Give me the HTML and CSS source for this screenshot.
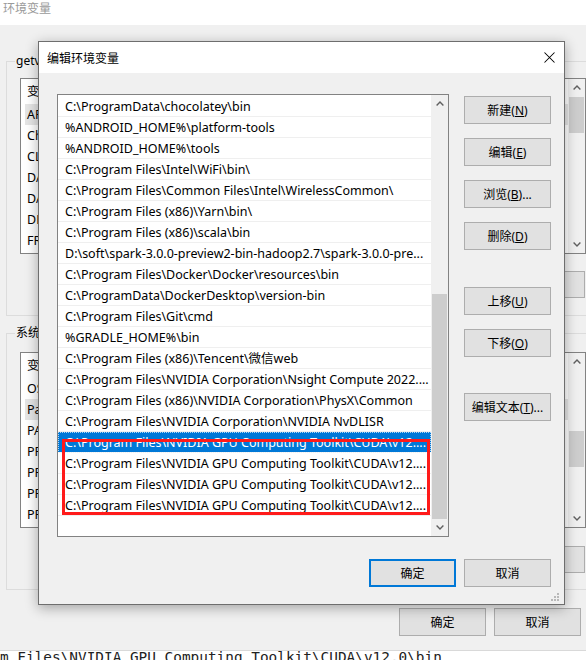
FILE: index.html
```html
<!DOCTYPE html>
<html lang="zh-CN">
<head>
<meta charset="utf-8">
<title>编辑环境变量</title>
<link rel="stylesheet" href="styles.css">
</head>
<body>
<div class="screen">
  <div class="env">
    <div class="env-title">环境变量</div>
    <div class="group group-user">
      <div class="group-label">getv 的用户变量(U)</div>
      <div class="vlist">
        <div class="vlist-body">
          <div class="vlist-head">变量</div>
          <div class="vrow sel">APP</div>
          <div class="vrow">Cho</div>
          <div class="vrow">CLA</div>
          <div class="vrow">DAT</div>
          <div class="vrow">DAS</div>
          <div class="vrow">DEV</div>
          <div class="vrow">FRP</div>
        </div>
        <div class="vscroll">
          <div class="sb-arrow"><svg width="8" height="5" viewBox="0 0 8 5"><path d="M0.6 4.4 L4 1 L7.4 4.4" fill="none" stroke="#606060" stroke-width="1.4"/></svg></div>
          <div class="sb-thumb thumb-user"></div>
          <div class="sb-arrow sb-end"><svg width="8" height="5" viewBox="0 0 8 5"><path d="M0.6 0.6 L4 4 L7.4 0.6" fill="none" stroke="#606060" stroke-width="1.4"/></svg></div>
        </div>
      </div>
      <div class="grp-buttons">
        <button class="btn">新建(N)...</button>
        <button class="btn">编辑(E)...</button>
        <button class="btn">删除(D)</button>
      </div>
    </div>
    <div class="group group-sys">
      <div class="group-label">系统变量(S)</div>
      <div class="vlist">
        <div class="vlist-body">
          <div class="vlist-head">变量</div>
          <div class="vrow">OS</div>
          <div class="vrow sel">Path</div>
          <div class="vrow">PATH</div>
          <div class="vrow">PRO</div>
          <div class="vrow">PRO</div>
          <div class="vrow">PRO</div>
          <div class="vrow">PRO</div>
        </div>
        <div class="vscroll">
          <div class="sb-arrow"><svg width="8" height="5" viewBox="0 0 8 5"><path d="M0.6 4.4 L4 1 L7.4 4.4" fill="none" stroke="#606060" stroke-width="1.4"/></svg></div>
          <div class="sb-thumb thumb-sys"></div>
          <div class="sb-arrow sb-end"><svg width="8" height="5" viewBox="0 0 8 5"><path d="M0.6 0.6 L4 4 L7.4 0.6" fill="none" stroke="#606060" stroke-width="1.4"/></svg></div>
        </div>
      </div>
      <div class="grp-buttons grp-buttons-sys">
        <button class="btn">新建(W)...</button>
        <button class="btn">编辑(I)...</button>
        <button class="btn">删除(L)</button>
      </div>
    </div>
    <div class="env-foot">
      <button class="btn btn-tall">确定</button>
      <button class="btn btn-tall">取消</button>
    </div>
  </div>
  <div class="console"><div class="console-text">m Files\NVIDIA GPU Computing Toolkit\CUDA\v12.0\bin</div></div>

  <div class="dlg">
    <div class="dlg-title">
      <span>编辑环境变量</span>
      <svg class="close" width="11" height="11" viewBox="0 0 11 11"><path d="M0.5 0.5 L10.5 10.5 M10.5 0.5 L0.5 10.5" stroke="#000" stroke-width="1.05" fill="none"/></svg>
    </div>
    <div class="dlg-body">
      <div class="dlg-main">
        <div class="plist">
          <div class="plist-rows">
            <div class="prow">C:\ProgramData\chocolatey\bin</div>
            <div class="prow">%ANDROID_HOME%\platform-tools</div>
            <div class="prow">%ANDROID_HOME%\tools</div>
            <div class="prow">C:\Program Files\Intel\WiFi\bin\</div>
            <div class="prow">C:\Program Files\Common Files\Intel\WirelessCommon\</div>
            <div class="prow">C:\Program Files (x86)\Yarn\bin\</div>
            <div class="prow">C:\Program Files (x86)\scala\bin</div>
            <div class="prow">D:\soft\spark-3.0.0-preview2-bin-hadoop2.7\spark-3.0.0-pre...</div>
            <div class="prow">C:\Program Files\Docker\Docker\resources\bin</div>
            <div class="prow">C:\ProgramData\DockerDesktop\version-bin</div>
            <div class="prow">C:\Program Files\Git\cmd</div>
            <div class="prow">%GRADLE_HOME%\bin</div>
            <div class="prow">C:\Program Files (x86)\Tencent\微信web</div>
            <div class="prow">C:\Program Files\NVIDIA Corporation\Nsight Compute 2022....</div>
            <div class="prow">C:\Program Files (x86)\NVIDIA Corporation\PhysX\Common</div>
            <div class="prow">C:\Program Files\NVIDIA Corporation\NVIDIA NvDLISR</div>
            <div class="prow sel">C:\Program Files\NVIDIA GPU Computing Toolkit\CUDA\v12....</div>
            <div class="prow">C:\Program Files\NVIDIA GPU Computing Toolkit\CUDA\v12....</div>
            <div class="prow">C:\Program Files\NVIDIA GPU Computing Toolkit\CUDA\v12....</div>
            <div class="prow">C:\Program Files\NVIDIA GPU Computing Toolkit\CUDA\v12....</div>
          </div>
          <div class="pscroll">
            <div class="sb-arrow"><svg width="8" height="5" viewBox="0 0 8 5"><path d="M0.6 4.4 L4 1 L7.4 4.4" fill="none" stroke="#606060" stroke-width="1.4"/></svg></div>
            <div class="sb-thumb thumb-path"></div>
            <div class="sb-arrow"><svg width="8" height="5" viewBox="0 0 8 5"><path d="M0.6 0.6 L4 4 L7.4 0.6" fill="none" stroke="#606060" stroke-width="1.4"/></svg></div>
          </div>
          <div class="mark"></div>
        </div>
        <div class="side">
          <button class="btn">新建(<u>N</u>)</button>
          <button class="btn">编辑(<u>E</u>)</button>
          <button class="btn">浏览(<u>B</u>)...</button>
          <button class="btn">删除(<u>D</u>)</button>
          <button class="btn side-gap">上移(<u>U</u>)</button>
          <button class="btn">下移(<u>O</u>)</button>
          <button class="btn side-gap2">编辑文本(<u>T</u>)...</button>
        </div>
      </div>
      <div class="dlg-foot">
        <button class="btn btn-tall btn-default">确定</button>
        <button class="btn btn-tall">取消</button>
      </div>
    </div>
    <svg class="grip" width="8" height="8" viewBox="0 0 8 8">
      <rect x="6" y="0" width="2" height="2" fill="#b8b8b8"/>
      <rect x="3" y="3" width="2" height="2" fill="#b8b8b8"/>
      <rect x="6" y="3" width="2" height="2" fill="#b8b8b8"/>
      <rect x="0" y="6" width="2" height="2" fill="#b8b8b8"/>
      <rect x="3" y="6" width="2" height="2" fill="#b8b8b8"/>
      <rect x="6" y="6" width="2" height="2" fill="#b8b8b8"/>
    </svg>
  </div>
</div>
</body>
</html>
```
FILE: styles.css
```css
* { box-sizing: border-box; }
html, body { margin: 0; padding: 0; }
body {
  background: #f0f0f0;
  font-family: "Noto Sans", "Noto Sans CJK SC", sans-serif;
  font-size: 12px;
  color: #000;
}
.screen {
  position: relative;
  width: 586px;
  height: 660px;
  overflow: hidden;
  background: #f0f0f0;
}

/* background window */
.env { width: 600px; height: 650px; background: #f0f0f0; }
.env-title {
  height: 25px;
  background: #fff;
  color: #9a9a9a;
  padding-left: 3px;
  line-height: 18px;
}
.group {
  position: relative;
  width: 593px;
  margin: 36px 0 0 6px;
  border: 1px solid #dcdcdc;
  padding: 16px 12px 17px 13px;
}
.group-sys { margin-top: 17px; padding-top: 18px; padding-bottom: 16px; }
.group-label {
  position: absolute;
  top: -9px;
  left: 8px;
  padding: 0 1px;
  line-height: 16px;
  background: #f0f0f0;
  white-space: nowrap;
}
.vlist {
  display: flex;
  height: 176px;
  border: 1px solid #828282;
  background: #fff;
}
.vlist-body { flex: 1; min-width: 0; padding-left: 4px; overflow: hidden; font-size: 12.5px; }
.vlist-head { height: 25px; line-height: 25px; padding-left: 2px; }
.vrow { height: 21px; line-height: 21px; padding-left: 2px; white-space: nowrap; }
.vrow.sel { background: #e5e5e5; }
.vscroll {
  width: 17px;
  display: flex;
  flex-direction: column;
  background: #f0f0f0;
}
.sb-arrow {
  height: 17px;
  flex: none;
  display: flex;
  align-items: center;
  justify-content: center;
}
.sb-end { margin-top: auto; }
.sb-thumb { width: 15px; margin-left: 1px; background: #cdcdcd; flex: none; }
.thumb-user { height: 36px; margin-top: 1px; }
.thumb-sys { height: 36px; margin-top: 61px; }
.grp-buttons {
  display: flex;
  justify-content: flex-end;
  gap: 8px;
  margin-top: 17px;
  margin-right: 1px;
}
.grp-buttons-sys { margin-top: 18px; }
.btn {
  width: 87px;
  height: 27px;
  flex: none;
  padding: 0;
  border: 1px solid #adadad;
  background: #e1e1e1;
  font: inherit;
  color: #000;
  display: flex;
  align-items: center;
  justify-content: center;
  white-space: nowrap;
}
.btn u { text-underline-offset: 1px; }
.btn-tall { height: 28px; }
.env-foot {
  display: flex;
  justify-content: flex-end;
  gap: 8px;
  margin-top: 18px;
  padding-right: 19px;
}
.console {
  height: 10px;
  border-top: 1px solid #d9d9d9;
  background: #fff;
  overflow: hidden;
  font-family: "DejaVu Sans Mono", monospace;
  font-size: 14.4px;
  line-height: 16px;
  color: #222;
  white-space: nowrap;
}
.console-text { margin-top: -2px; }

/* edit dialog */
.dlg {
  position: absolute;
  left: 38px;
  top: 41px;
  width: 527px;
  height: 564px;
  border: 1px solid #6e6e6e;
  background: #f0f0f0;
  box-shadow: 0 3px 12px rgba(0, 0, 0, 0.32);
  display: flex;
  flex-direction: column;
}
.dlg-title {
  height: 31px;
  flex: none;
  background: #fff;
  display: flex;
  align-items: center;
  justify-content: space-between;
  padding: 0 9px 0 8px;
}
.dlg-body { flex: 1; padding: 21px 13px 0 18px; }
.dlg-main { display: flex; gap: 15px; }
.plist {
  position: relative;
  display: flex;
  width: 392px;
  height: 443px;
  border: 1px solid #828282;
  background: #fff;
}
.plist-rows { flex: 1; min-width: 0; padding-top: 1px; overflow: hidden; font-size: 12.5px; }
.prow {
  height: 21px;
  line-height: 21px;
  padding-left: 7px;
  border-bottom: 1px solid #efefef;
  white-space: nowrap;
  overflow: hidden;
}
.prow.sel {
  background: #0078d7;
  color: #fff;
  outline: 1px dotted rgba(255, 255, 255, 0.7);
  outline-offset: -1px;
}
.pscroll {
  width: 17px;
  display: flex;
  flex-direction: column;
  background: #f0f0f0;
}
.thumb-path { margin-top: auto; height: 225px; }
.mark {
  position: absolute;
  top: 344px;
  left: 4px;
  width: 368px;
  height: 76px;
  border: 3px solid #ff1a1a;
}
.side { display: flex; flex-direction: column; gap: 14px; padding-top: 2px; }
.side .btn { height: 28px; }
.side-gap { margin-top: 23px; }
.side-gap2 { margin-top: 22px; }
.dlg-foot {
  display: flex;
  justify-content: flex-end;
  gap: 8px;
  margin-top: 22px;
}
.btn-default { border: 2px solid #0078d7; }
.grip { position: absolute; right: 5px; bottom: 3px; }
```
